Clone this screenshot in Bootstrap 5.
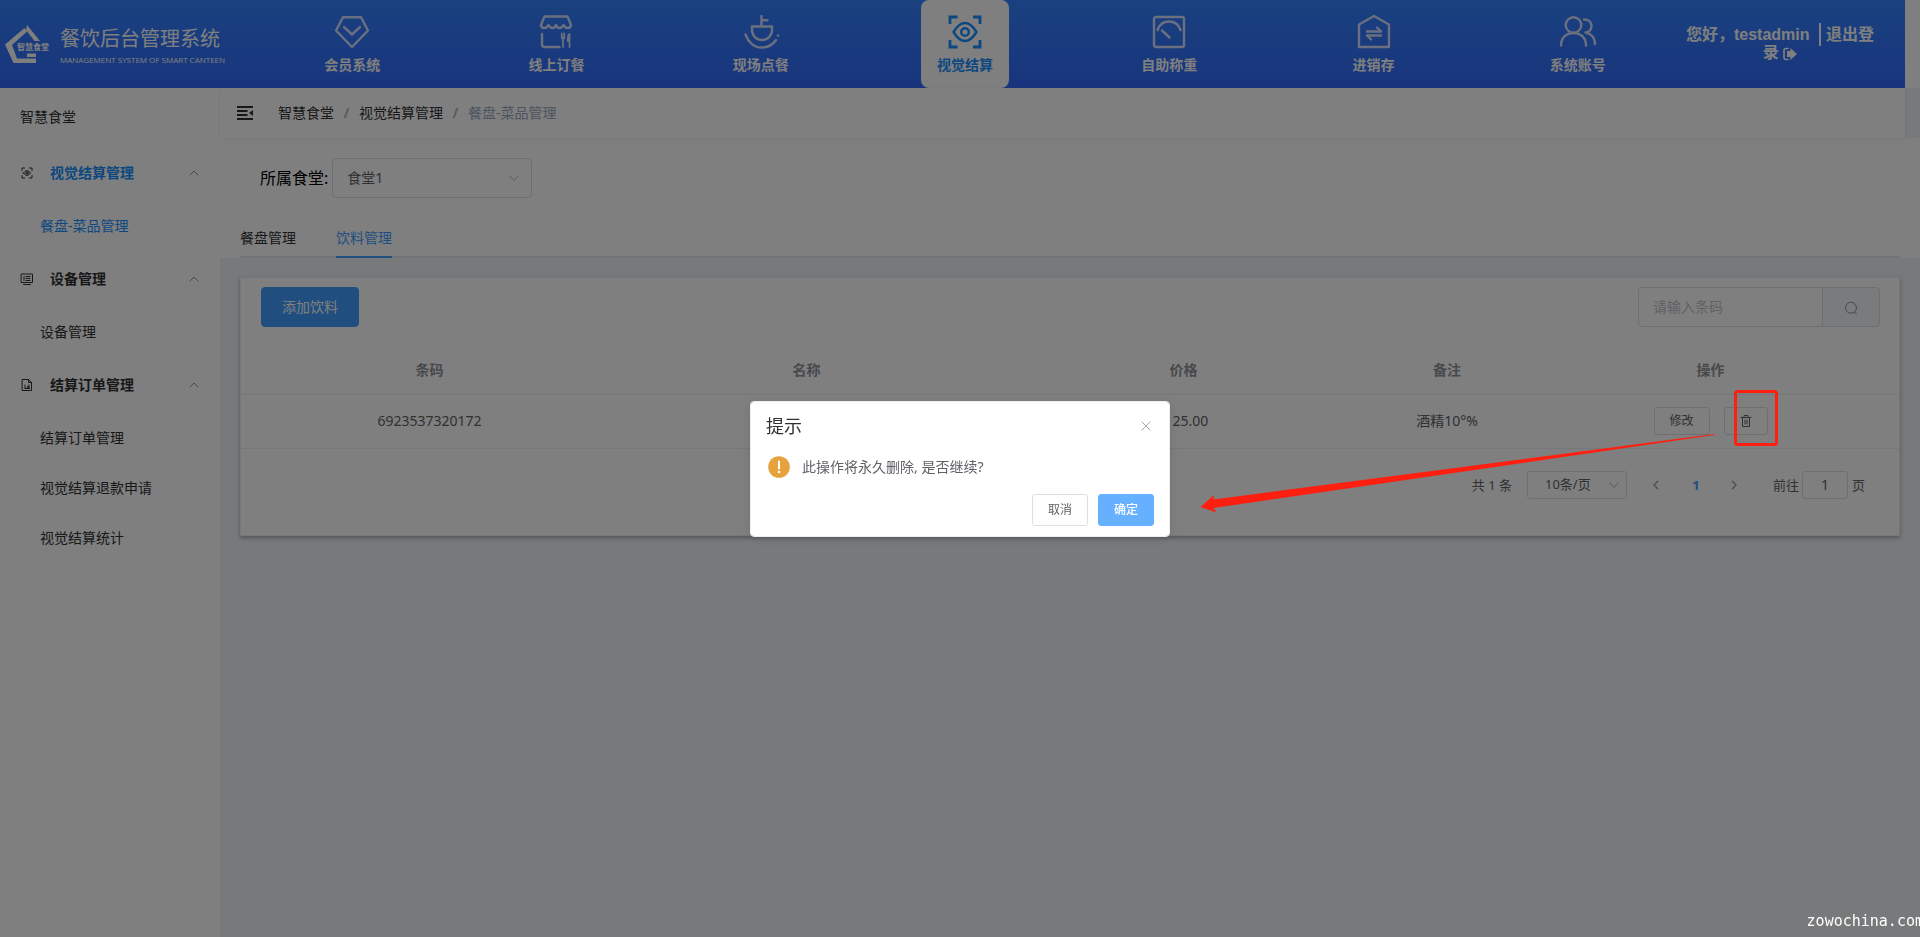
<!DOCTYPE html>
<html lang="zh-CN">
<head>
<meta charset="utf-8">
<meta name="viewport" content="width=device-width, initial-scale=1">
<title>餐饮后台管理系统</title>
<link rel="stylesheet" href="https://cdn.jsdelivr.net/npm/bootstrap@5.3.0/dist/css/bootstrap.min.css">
<style>
  :root { --blue: #409eff; --line: #dcdfe6; --txt: #606266; --page: #f0f2f5; }
  body { font: 14px/20px "Noto Sans", "Noto Sans CJK SC", sans-serif; color: #303133; background: var(--page); }
  a { text-decoration: none; color: inherit; }
  svg { fill: none; stroke: currentColor; stroke-linecap: round; stroke-linejoin: round; overflow: visible; }
  .app { min-height: 100vh; }

  /* top bar */
  .top-wrap { background: #fff; padding-right: 15px; }
  .top-bar { height: 88px; background: linear-gradient(#3482ff, #316afa); color: #fff; }
  .logo-box { width: 250px; padding: 24px 0 0 4px; gap: 8px; }
  .logo-mark { width: 48px; height: 42px; stroke: none; fill: #fff; }
  .logo-mark text { font: 700 8px "Noto Sans CJK SC", sans-serif; }
  .logo-title { font: 400 20px/28px "Noto Sans CJK SC", sans-serif; }
  .logo-sub { font: 400 8px/12px "Open Sans", sans-serif; margin-top: 2px; }
  .sys { flex: 1 1 0; }
  .sys a { width: 88px; height: 88px; padding-top: 14px; gap: 5px; color: #fff; font-weight: 700; }
  .sys svg { width: 36px; height: 36px; stroke-width: 2.4; color: #d4e0ff; }
  .sys a.on { background: #fff; color: #1890ff; border-radius: 8px; }
  .sys a.on svg { color: #1890ff; }
  .user-box { width: 200px; margin-right: 25px; font: 700 16px/18px "Liberation Sans", "Noto Sans CJK SC", sans-serif; }
  .logout { border-left: 2px solid #fff; padding: 3px 0 3px 5px; margin-left: 5px; }

  /* side menu */
  .side { width: 220px; background: #fff; }
  .side-head { height: 57px; padding-left: 20px; }
  .grp { height: 56px; padding: 0 21px; gap: 17px; font-weight: 700; }
  .grp svg { width: 12px; height: 12px; stroke-width: 1; }
  .sub { height: 50px; padding-left: 40px; }
  .side .on { color: #1890ff; }
  .side .grp svg { color: #303133; }
  .side .grp .chev { width: 10px; color: #909399; }

  /* content */
  .crumbs { height: 50px; margin-right: 15px; padding-left: 17px; gap: 25px; background: #fff; box-shadow: 0 1px 4px rgba(0,21,41,.08); }
  .breadcrumb { --bs-breadcrumb-item-padding-x: 9px; --bs-breadcrumb-divider-color: #c0c4cc; --bs-breadcrumb-item-active-color: #97a8be; }
  .breadcrumb-item + .breadcrumb-item::before { font-weight: 700; width: 25px; text-align: center; padding: 0; color: #b0b4bc; }
  .breadcrumb-item + .breadcrumb-item { padding-left: 0; }
  .filters { background: #fff; padding: 20px 20px 0; }
  .filters label { font-size: 16px; color: #000; }
  .form-select, .form-control { border-color: var(--line); border-radius: 4px; color: var(--txt); font-size: 14px;
    background-color: #fff; }
  .form-select { background-image: url("data:image/svg+xml,%3Csvg xmlns='http://www.w3.org/2000/svg' viewBox='0 0 12 12'%3E%3Cpath d='M1.500 3.500 6 8.500 10.500 3.500' fill='none' stroke='%23b4b8bf'/%3E%3C/svg%3E");
    background-size: 12px; background-position: right 11px center; }
  .pick { width: 200px; height: 40px; padding: 0 30px 1px 14px; }
  .nav-tabs { --bs-nav-tabs-border-width: 0; border-bottom: 2px solid #e4e7ed; gap: 40px; margin-top: 20px; }
  .nav-tabs .nav-link { padding: 0; height: 40px; line-height: 40px; margin-bottom: -2px; border: 0; border-bottom: 2px solid transparent; border-radius: 0; color: #303133; }
  .nav-tabs .nav-link.active { color: var(--blue); border-bottom-color: var(--blue); background: none; }
  .panel { margin: 19px 20px; background: #fff; border: 1px solid #ebeef5; box-shadow: 0 2px 4px rgba(0,0,0,.3); padding-bottom: 36px; }
  .tools { padding: 9px 19px 0 20px; }
  .btn { --bs-btn-font-size: 14px; --bs-btn-border-radius: 4px; --bs-btn-line-height: 20px; }
  .btn-main { --bs-btn-bg: #409eff; --bs-btn-border-color: #409eff; --bs-btn-color: #fff; width: 98px; height: 40px; padding: 0; }
  .find { width: 242px; height: 40px; }
  .find .form-control { padding: 0 14px 1px; }
  .find .form-control::placeholder { color: #c0c4cc; }
  .find .btn { width: 58px; padding: 0; background: #f5f7fa; border-color: var(--line); color: #909399; }
  .find svg { width: 14px; height: 14px; stroke-width: 1; }
  .grid-table { table-layout: fixed; margin: 20px 0 0; --bs-table-color: var(--txt); text-align: center; }
  .grid-table > thead th { color: #909399; font-weight: 700; height: 47px; padding: 0; border-color: #ebeef5; vertical-align: middle; }
  .grid-table > tbody td { color: var(--txt); height: 54px; padding: 0; border-color: #ebeef5; vertical-align: middle; }
  .grid-table > tbody td.price { padding-left: 14px; }
  .note-col { width: 150px; }
  .acts { gap: 14px; }
  .btn-line { --bs-btn-font-size: 12px; --bs-btn-color: #606266; --bs-btn-bg: #fff; --bs-btn-border-color: #dcdfe6; --bs-btn-border-radius: 3px; padding: 0; }
  .btn-edit { width: 56px; height: 28px; }
  .btn-del { width: 44px; height: 28px; }
  .btn-del svg { width: 12px; height: 12px; stroke-width: 1; display: block; margin: 0 auto; }
  .pager { margin-top: 22px; padding-right: 34px; font-size: 13px; color: var(--txt); }
  .pager .form-select { width: 100px; height: 28px; padding: 0 25px 0 17px; font-size: 13px; border-radius: 3px; background-position: right 6px center; margin: 0 23px 0 15px; }
  .pager .form-control { width: 46px; height: 28px; padding: 0; text-align: center; margin: 0 4px 0 3px; border-radius: 3px; }
  .pager button { border: 0; background: none; padding: 0; width: 14px; height: 28px; line-height: 28px; color: #909399; }
  .pager button svg { width: 12px; height: 10px; stroke-width: 1.4; display: block; }
  .pager button.cur { color: var(--blue); font-weight: 700; margin: 0 25px; }
  .pager label { margin-left: 31px; }

  /* dialog */
  .modal-backdrop { opacity: .5; }
  .modal-dialog { --bs-modal-width: 420px; }
  .modal-content { border: 1px solid #ebeef5; border-radius: 4px; box-shadow: 0 2px 12px rgba(0,0,0,.1); padding: 14px 15px 10px; }
  .modal-title { font-size: 18px; line-height: 20px; font-weight: 400; color: #303133; }
  .x-btn { border: 0; background: none; padding: 0; width: 16px; height: 20px; color: #909399; }
  .x-btn svg { width: 10px; height: 10px; stroke-width: 1; display: block; margin: auto; }
  .msg { padding: 20px 2px 16px; gap: 12px; color: var(--txt); }
  .msg svg { width: 22px; height: 22px; }
  .modal .btn { width: 56px; height: 32px; }
  .btn-ok { --bs-btn-font-size: 12px; --bs-btn-color: #fff; --bs-btn-bg: #66b1ff; --bs-btn-border-color: #66b1ff; --bs-btn-border-radius: 3px; padding: 0; font-weight: 500; }

  /* annotation layer */
  .marks { inset: 0; z-index: 2000; pointer-events: none; overflow: hidden; }
  .marks svg { width: 1920px; height: 937px; }
  .site-mark { right: -4px; bottom: 7px; font: 400 15px/18px "DejaVu Sans Mono", monospace; color: #fff; }
</style>
</head>
<body>
<div class="app d-flex flex-column">
  <div class="top-wrap">
    <header class="top-bar d-flex">
      <div class="logo-box d-flex flex-shrink-0">
        <svg class="logo-mark" viewBox="0 0 48 42" aria-hidden="true">
          <path d="M23 1 36 17H30.500L22 6Z"/>
          <path d="M20.500 4 23 7.500 8 21 13 34.500H32V39H9.500L1 20.500Z"/>
          <path d="M23 29.500H32V33H23Z"/>
          <text x="13" y="26">智慧食堂</text>
        </svg>
        <div>
          <div class="logo-title">餐饮后台管理系统</div>
          <div class="logo-sub text-nowrap">MANAGEMENT SYSTEM OF SMART CANTEEN</div>
        </div>
      </div>
      <nav class="d-flex flex-fill">
        <div class="sys d-flex justify-content-center"><a href="#" class="d-flex flex-column align-items-center">
          <svg viewBox="0 0 36 36"><path d="M9 3.200H27L34 16.500 18 33 2 16.500ZM10 13 18 20.500 26 13"/></svg>会员系统</a></div>
        <div class="sys d-flex justify-content-center"><a href="#" class="d-flex flex-column align-items-center">
          <svg viewBox="0 0 36 36"><path d="M6.500 2.500H29.500L33 11Q33 14 29.500 14 27 14 25.500 11 24 14 21.500 14 19 14 18 11 17 14 14.500 14 12 14 10.500 11 9 14 6.500 14 3 14 3 11ZM4 20V30.500Q4 33 6.500 33H21.500"/><path d="M23.800 19.500V24M26.200 19.500V24M25 24V33M31.500 33V20Q29.500 22 29.800 27H31" stroke-width="1.800"/></svg>线上订餐</a></div>
        <div class="sys d-flex justify-content-center"><a href="#" class="d-flex flex-column align-items-center">
          <svg viewBox="0 0 36 36"><path d="M18.500 2V12M18.500 6.200H24.500M9 12.500H29V16A10 10 0 0 1 9 16ZM2.500 20.500C5 28 11 33.500 18.500 33.500 25 33.500 30 30.500 33 26M35 21.500H35.200"/></svg>现场点餐</a></div>
        <div class="sys d-flex justify-content-center"><a href="#" class="on d-flex flex-column align-items-center">
          <svg viewBox="0 0 36 36"><path d="M3 10V3H10.500M26 3H33V10M33 26V33H26M10.500 33H3V26" stroke-linejoin="miter" stroke-linecap="butt" stroke-width="2.800"/><path d="M6.500 18Q12 9 18 9T29.500 18Q24 27 18 27T6.500 18Z"/><circle cx="18" cy="18" r="3.800"/></svg>视觉结算</a></div>
        <div class="sys d-flex justify-content-center"><a href="#" class="d-flex flex-column align-items-center">
          <svg viewBox="0 0 36 36"><rect x="3" y="3" width="30" height="30" rx="2"/><path d="M6.500 16C8.500 10 13 7.500 18 7.500S27.500 10 29.500 16M11 16.500 18.500 23.500"/></svg>自助称重</a></div>
        <div class="sys d-flex justify-content-center"><a href="#" class="d-flex flex-column align-items-center">
          <svg viewBox="0 0 36 36"><path d="M18 2 33 10.500V33H3V10.500ZM11 17.500H25L21 13.500M25 21.500H11L15 25.500"/></svg>进销存</a></div>
        <div class="sys d-flex justify-content-center"><a href="#" class="d-flex flex-column align-items-center">
          <svg viewBox="0 0 36 36"><circle cx="13.500" cy="11" r="7.800"/><path d="M1 31.500C1 24 6 19 13.500 19S26 24 26 31.500M24 5.500C29 5.500 31.500 8.500 31.500 12S29 18.500 25.500 18.500C31 19.500 35 23.500 35 30"/></svg>系统账号</a></div>
      </nav>
      <div class="user-box align-self-center text-center flex-shrink-0">您好，testadmin <a href="#" class="logout">退出登录 <svg width="14" height="14" viewBox="0 0 14 14"><path d="M5 1.500H3Q1 1.500 1 3.500V10.500Q1 12.500 3 12.500H5" stroke-width="1.600"/><path d="M4 4H7.500V1L14 7 7.500 13V10H4Z" fill="currentColor" stroke="none"/></svg></a></div>
    </header>
  </div>

  <div class="d-flex flex-fill">
    <aside class="side flex-shrink-0">
      <div class="side-head d-flex align-items-center">智慧食堂</div>
      <a href="#" class="grp on d-flex align-items-center"><svg viewBox="0 0 12 12"><path d="M1 3.500V1H3.500M8.500 1H11V3.500M11 8.500V11H8.500M3.500 11H1V8.500M2.500 6Q6 1 9.500 6 6 11 2.500 6Z"/><circle cx="6" cy="6" r="1.200"/></svg><span class="flex-fill">视觉结算管理</span><svg class="chev" viewBox="0 0 10 12"><path d="M1 8 5 4 9 8"/></svg></a>
      <a href="#" class="sub on d-flex align-items-center">餐盘-菜品管理</a>
      <a href="#" class="grp d-flex align-items-center"><svg viewBox="0 0 12 12"><path d="M.5 1H11.500V9.500H.5ZM2.500 11.500H9.500M3 3.500V7.500M5 3.500H9M5 5.500H9M5 7.500H9"/></svg><span class="flex-fill">设备管理</span><svg class="chev" viewBox="0 0 10 12"><path d="M1 8 5 4 9 8"/></svg></a>
      <a href="#" class="sub d-flex align-items-center">设备管理</a>
      <a href="#" class="grp d-flex align-items-center"><svg viewBox="0 0 12 12"><path d="M1.500.5H7.500L10.500 3.500V11.500H1.500ZM7.500.5V3.500H10.500M4 6V9M6 9 7 7 8 9V6M4 9.500H8.500"/></svg><span class="flex-fill">结算订单管理</span><svg class="chev" viewBox="0 0 10 12"><path d="M1 8 5 4 9 8"/></svg></a>
      <a href="#" class="sub d-flex align-items-center">结算订单管理</a>
      <a href="#" class="sub d-flex align-items-center">视觉结算退款申请</a>
      <a href="#" class="sub d-flex align-items-center">视觉结算统计</a>
    </aside>

    <main class="flex-fill">
      <div class="crumbs d-flex align-items-center position-relative">
        <svg width="16" height="14" viewBox="0 0 16 14" stroke-width="1.800" style="stroke-linecap:butt"><path d="M0 1H16M0 5H10.500M0 9H10.500M0 13H16"/><path d="M16 4V10L12 7Z" fill="currentColor" stroke="none"/></svg>
        <nav aria-label="breadcrumb"><ol class="breadcrumb mb-0">
          <li class="breadcrumb-item"><a href="#">智慧食堂</a></li>
          <li class="breadcrumb-item"><a href="#">视觉结算管理</a></li>
          <li class="breadcrumb-item active" aria-current="page">餐盘-菜品管理</li>
        </ol></nav>
      </div>
      <section class="filters">
        <div class="d-flex align-items-center ps-3">
          <label for="canteen" class="ms-1 me-1">所属食堂:</label>
          <select id="canteen" class="form-select pick"><option>食堂1</option></select>
        </div>
        <ul class="nav nav-tabs">
          <li class="nav-item"><a class="nav-link" href="#">餐盘管理</a></li>
          <li class="nav-item"><a class="nav-link active" href="#">饮料管理</a></li>
        </ul>
      </section>

      <section class="panel">
        <div class="tools d-flex justify-content-between">
          <button type="button" class="btn btn-main">添加饮料</button>
          <div class="input-group find">
            <input type="text" class="form-control" placeholder="请输入条码" aria-label="请输入条码">
            <button type="button" class="btn" aria-label="搜索"><svg viewBox="0 0 14 14"><circle cx="7" cy="6.800" r="5.500"/><path d="M10.500 11 12.500 12.800"/></svg></button>
          </div>
        </div>
        <table class="table grid-table">
          <colgroup><col><col><col><col class="note-col"><col></colgroup>
          <thead><tr><th>条码</th><th>名称</th><th>价格</th><th>备注</th><th>操作</th></tr></thead>
          <tbody><tr>
            <td>6923537320172</td><td></td><td class="price">25.00</td><td>酒精10°%</td>
            <td><div class="acts d-flex justify-content-center">
              <button type="button" class="btn btn-line btn-edit">修改</button>
              <button type="button" class="btn btn-line btn-del" aria-label="删除"><svg viewBox="0 0 12 12"><path d="M1 2.500H11M4 2.500V.5H8V2.500M2.500 2.500V11.500H9.500V2.500M5 5V9M7 5V9"/></svg></button>
            </div></td>
          </tr></tbody>
        </table>
        <div class="pager d-flex justify-content-end align-items-center">
          <span>共 1 条</span>
          <select class="form-select" aria-label="每页条数"><option>10条/页</option></select>
          <button type="button" aria-label="上一页"><svg viewBox="0 0 12 12"><path d="M8 1.500 3.500 6 8 10.500"/></svg></button>
          <button type="button" class="cur">1</button>
          <button type="button" aria-label="下一页"><svg viewBox="0 0 12 12"><path d="M4 1.500 8.500 6 4 10.500"/></svg></button>
          <label for="goto">前往</label>
          <input id="goto" type="text" class="form-control" value="1">
          <span>页</span>
        </div>
      </section>
    </main>
  </div>
</div>

<div class="modal-backdrop"></div>
<div class="modal d-block" role="dialog" aria-modal="true" aria-labelledby="tip">
  <div class="modal-dialog modal-dialog-centered">
    <div class="modal-content">
      <div class="d-flex justify-content-between">
        <h2 class="modal-title" id="tip">提示</h2>
        <button type="button" class="x-btn" aria-label="关闭"><svg viewBox="0 0 12 12"><path d="M1 1 11 11M11 1 1 11"/></svg></button>
      </div>
      <div class="msg d-flex align-items-center">
        <svg viewBox="0 0 22 22"><circle cx="11" cy="11" r="10.800" fill="#e6a23c" stroke="none"/><path d="M11 5.500V12.500" stroke="#fff" stroke-width="2"/><circle cx="11" cy="16" r="1.300" fill="#fff" stroke="none"/></svg>
        <span>此操作将永久删除, 是否继续?</span>
      </div>
      <div class="d-flex justify-content-end" style="gap:10px">
        <button type="button" class="btn btn-line">取消</button>
        <button type="button" class="btn btn-ok">确定</button>
      </div>
    </div>
  </div>
</div>

<div class="marks position-absolute">
  <svg viewBox="0 0 1920 937" aria-hidden="true">
    <rect x="1735.500" y="391.500" width="41" height="53" rx="2" stroke="#ff1f10" stroke-width="3"/>
    <path d="M1200.500 507 1214 495 1213.500 499.500 1714.500 434 1714 435 1213.500 508 1216.500 512.500Z" fill="#ff1f10" stroke="none"/>
  </svg>
  <span class="site-mark position-absolute">zowochina.com</span>
</div>
<script src="https://cdn.jsdelivr.net/npm/bootstrap@5.3.0/dist/js/bootstrap.bundle.min.js"></script>
</body>
</html>
